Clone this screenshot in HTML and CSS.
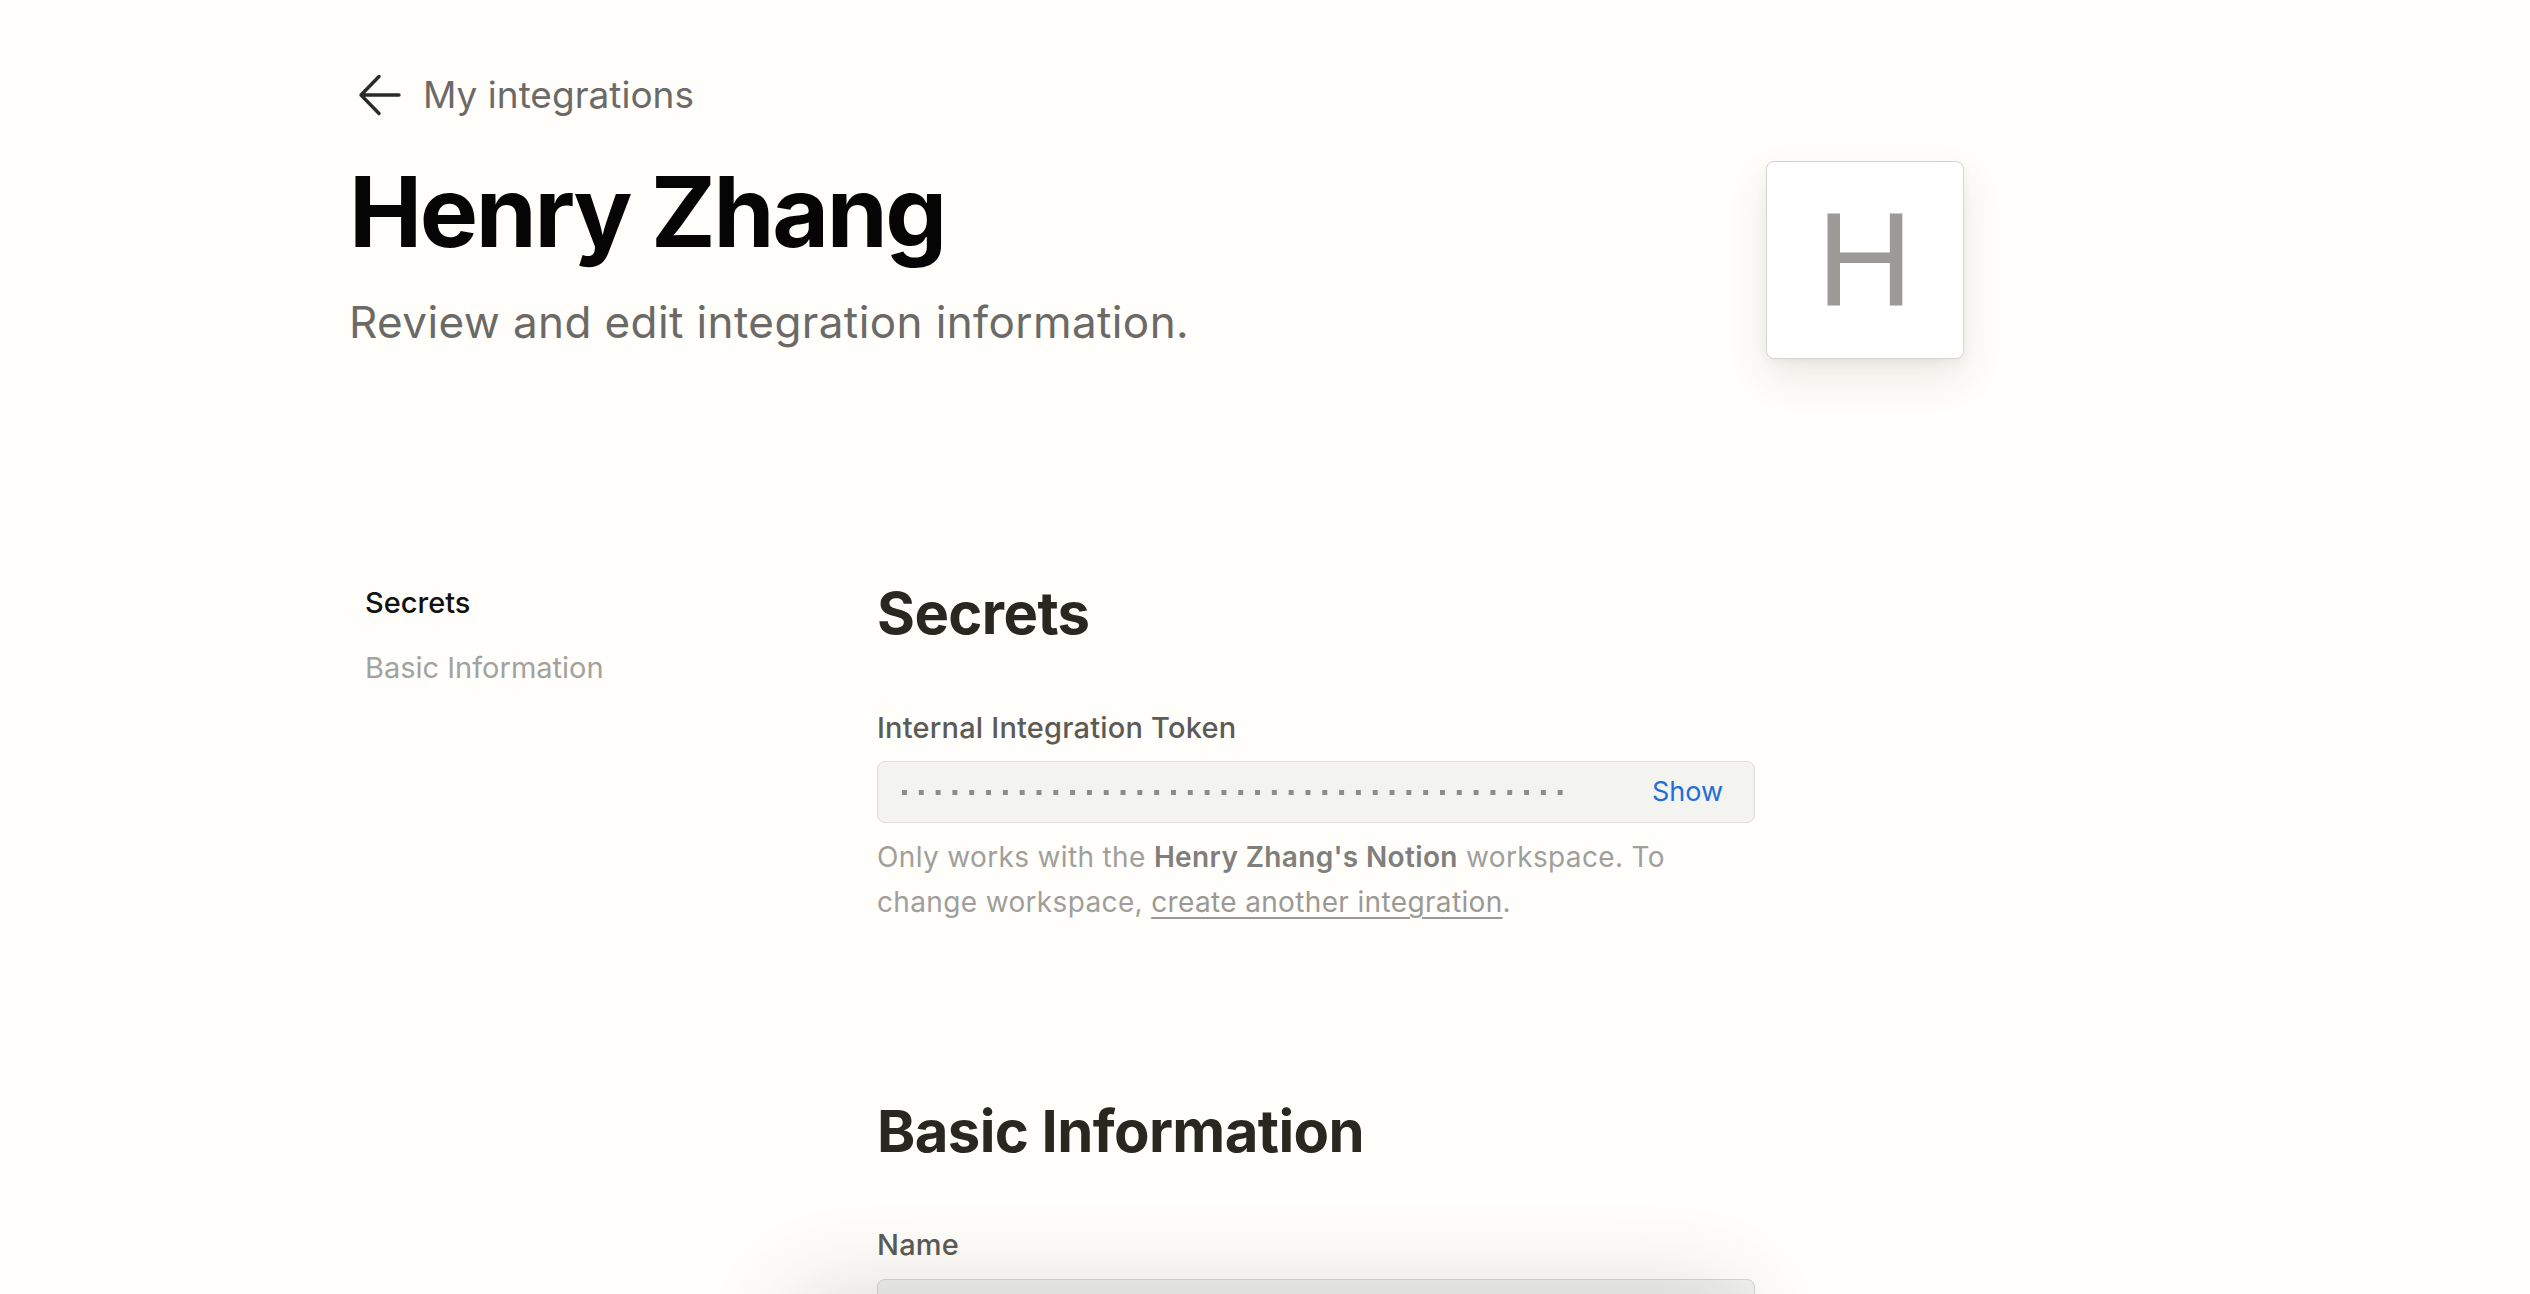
FILE: index.html
```html
<!DOCTYPE html>
<html lang="en">
<head>
    <meta charset="UTF-8">
    <meta name="viewport" content="width=device-width, initial-scale=1.0">
    <title>Henry Zhang - Integration</title>
    <link rel="stylesheet" href="styles.css">
</head>
<body>
    <div class="page">
        <a href="#" class="back">
            <svg class="back-icon" viewBox="0 0 44 44" width="44" height="44">
                <path d="M42 22 H5 M22 3.5 L4 22 L22 40.5" fill="none" stroke="#2c2b28" stroke-width="3.4" stroke-linecap="round" stroke-linejoin="round"/>
            </svg>
            <span>My integrations</span>
        </a>
        <header class="head">
            <div class="head-text">
                <h1 class="title">Henry Zhang</h1>
                <p class="subtitle">Review and edit integration information.</p>
            </div>
            <div class="avatar">H</div>
        </header>
        <div class="layout">
            <nav class="side">
                <a href="#secrets" class="side-link active">Secrets</a>
                <a href="#basic" class="side-link">Basic Information</a>
            </nav>
            <main class="main">
                <section class="sec" id="secrets">
                    <h2>Secrets</h2>
                    <div class="field-label">Internal Integration Token</div>
                    <div class="token-box">
                        <span class="dots"></span>
                        <button class="show-btn">Show</button>
                    </div>
                    <p class="help">Only works with the <strong>Henry Zhang's Notion</strong> workspace. To change workspace, <a href="#">create another integration</a>.</p>
                </section>
                <section class="sec sec-basic" id="basic">
                    <h2>Basic Information</h2>
                    <div class="field-label">Name</div>
                    <div class="input-box"></div>
                </section>
            </main>
        </div>
    </div>
    <div class="bottom-bar"></div>
</body>
</html>
```

FILE: styles.css
```css
body {
    margin: 0;
    background: #fffefb;
    font-family: Inter, "Noto Sans", sans-serif;
    color: #2b2925;
    overflow: hidden;
    height: 100vh;
}
.page {
    padding-left: 349px;
    width: 1615px;
}
.back {
    display: flex;
    align-items: center;
    gap: 22px;
    margin-top: 73px;
    height: 44px;
    padding-left: 8px;
    text-decoration: none;
    color: #6b6a66;
    font-size: 37px;
    line-height: 44px;
}
.back-icon {
    display: block;
}
.head {
    display: flex;
    justify-content: space-between;
    align-items: flex-start;
}
.title {
    margin: 36px 0 0;
    font-size: 98px;
    line-height: 118px;
    font-weight: 700;
    color: #050505;
    letter-spacing: -2.4px;
}
.subtitle {
    margin: 25px 0 0;
    font-size: 44px;
    line-height: 52px;
    letter-spacing: 0.4px;
    color: #6b6a66;
}
.avatar {
    margin-top: 44px;
    width: 196px;
    height: 196px;
    border: 1px solid #d4d3cf;
    border-radius: 8px;
    background: #fff;
    box-shadow: 0 18px 40px rgba(60, 50, 30, 0.10), 0 4px 10px rgba(60, 50, 30, 0.05);
    display: flex;
    align-items: center;
    justify-content: center;
    font-family: "Liberation Sans", Arial, sans-serif;
    font-size: 134px;
    color: #9b9a97;
    line-height: 1;
}
.layout {
    display: flex;
    margin-top: 219px;
}
.side {
    width: 528px;
    padding-left: 16px;
    padding-top: 5px;
    display: flex;
    flex-direction: column;
    gap: 25px;
    box-sizing: border-box;
}
.side-link {
    font-size: 29px;
    line-height: 40px;
    color: #a3a29e;
    text-decoration: none;
}
.side-link.active {
    color: #111;
    font-weight: 500;
}
.main {
    width: 878px;
}
.sec h2 {
    margin: 0;
    font-size: 58px;
    line-height: 70px;
    font-weight: 700;
    color: #29271f;
    letter-spacing: -0.6px;
}
.field-label {
    margin-top: 62px;
    font-size: 29px;
    line-height: 36px;
    font-weight: 500;
    letter-spacing: 0.2px;
    color: #5c5b57;
}
.token-box {
    margin-top: 15px;
    height: 60px;
    border: 1px solid #dedddA;
    border-radius: 8px;
    background: #f3f3f0;
    display: flex;
    align-items: center;
    justify-content: space-between;
    padding: 0 31px 0 24px;
}
.dots {
    width: 661px;
    height: 5px;
    background-image: linear-gradient(90deg, #8d8c88 5px, transparent 5px);
    background-size: 16.82px 5px;
    background-repeat: repeat-x;
}
.show-btn {
    border: none;
    background: none;
    padding: 0;
    font-family: inherit;
    font-size: 27px;
    line-height: 36px;
    color: #1f6fd9;
    cursor: pointer;
}
.help {
    margin: 12px 0 0;
    font-size: 28px;
    line-height: 45px;
    letter-spacing: 0.35px;
    color: #a09f9b;
}
.help strong {
    color: #807f7b;
    font-weight: 600;
}
.help a {
    color: #9a9995;
    text-decoration: underline;
    text-underline-offset: 5px;
}
.sec-basic {
    margin-top: 171px;
}
.sec-basic .field-label {
    margin-top: 61px;
}
.input-box {
    margin-top: 16px;
    height: 70px;
    border: 1px solid #d8d7d4;
    border-radius: 8px;
    background: #f1f1ee;
}
.bottom-bar {
    position: fixed;
    left: 50%;
    transform: translateX(-50%);
    bottom: -120px;
    width: 900px;
    height: 100px;
    border-radius: 12px;
    background: #fff;
    box-shadow: 0 0 90px 24px rgba(40, 35, 25, 0.16);
}
```
